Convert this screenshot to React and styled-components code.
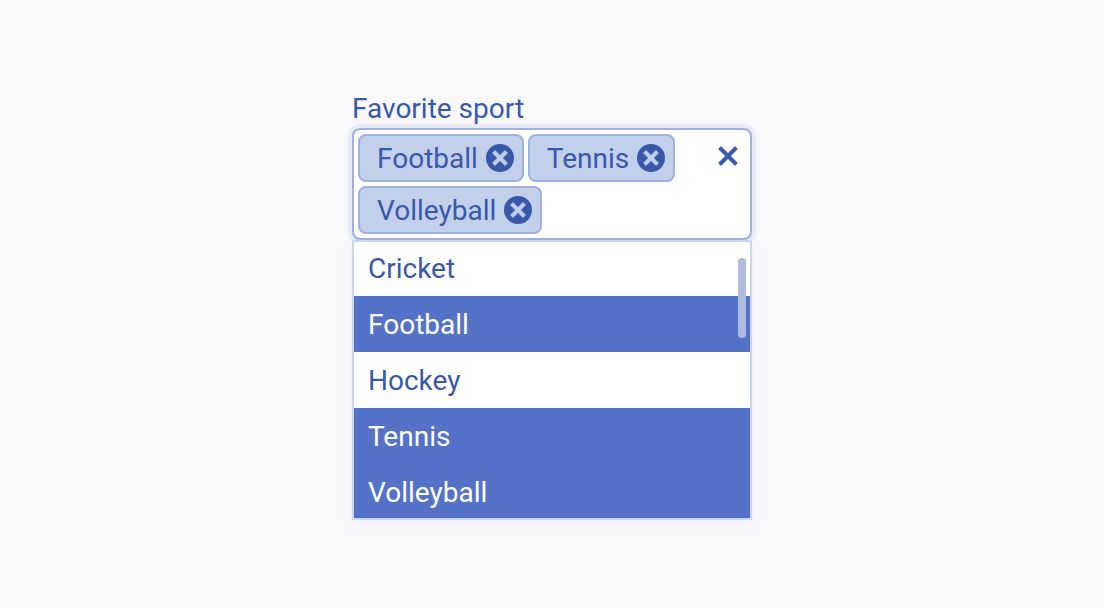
import { useState } from 'react'
import styled, { createGlobalStyle } from 'styled-components'

const sports = ['Cricket', 'Football', 'Hockey', 'Tennis', 'Volleyball']

const RemoveIcon = () => (
  <svg width='28' height='28' viewBox='-14 -14 28 28' aria-hidden='true'>
    <circle r='14' fill='#3858ac' />
    <path
      d='M0 -2.4L5 -7.4L7.4 -5L2.4 0L7.4 5L5 7.4L0 2.4L-5 7.4L-7.4 5L-2.4 0L-7.4 -5L-5 -7.4Z'
      fill='#c2d0eb'
      stroke='#c2d0eb'
      strokeLinejoin='round'
    />
  </svg>
)

const ClearIcon = () => (
  <svg width='28' height='28' viewBox='-14 -14 28 28' aria-hidden='true'>
    <path
      d='M0 -2.4L7 -9.4L9.4 -7L2.4 0L9.4 7L7 9.4L0 2.4L-7 9.4L-9.4 7L-2.4 0L-9.4 -7L-7 -9.4Z'
      fill='#3858ac'
      stroke='#3858ac'
      strokeLinejoin='round'
    />
  </svg>
)

const App = () => {
  const [selected, setSelected] = useState(['Football', 'Tennis', 'Volleyball'])

  const toggle = (sport) => {
    setSelected(
      selected.includes(sport)
        ? selected.filter((s) => s !== sport)
        : [...selected, sport]
    )
  }

  return (
    <Page>
      <GlobalStyle />
      <Field role='group' aria-labelledby='sport-label'>
        <Label id='sport-label'>Favorite sport</Label>
        <Control>
          <Chips>
            {selected.map((sport) => (
              <Chip key={sport}>
                {sport}
                <IconButton
                  type='button'
                  aria-label={`Remove ${sport}`}
                  onClick={() => toggle(sport)}
                >
                  <RemoveIcon />
                </IconButton>
              </Chip>
            ))}
          </Chips>
          <Clear>
            <IconButton
              type='button'
              aria-label='Clear all'
              onClick={() => setSelected([])}
            >
              <ClearIcon />
            </IconButton>
          </Clear>
        </Control>
        <Panel>
          <Options>
            {sports.map((sport) => (
              <li key={sport}>
                <Option $selected={selected.includes(sport)}>
                  <Check
                    type='checkbox'
                    checked={selected.includes(sport)}
                    onChange={() => toggle(sport)}
                  />
                  {sport}
                </Option>
              </li>
            ))}
          </Options>
          <Thumb />
        </Panel>
      </Field>
    </Page>
  )
}

const GlobalStyle = createGlobalStyle`
  * {
    box-sizing: border-box;
  }
  body {
    margin: 0;
    background-color: #f9f9fc;
    color: #3858ac;
    font-family: Roboto, sans-serif;
    font-size: 28px;
  }
`

const Page = styled.main`
  display: flex;
  justify-content: center;
  align-items: center;
  min-height: 100vh;
`

const Field = styled.div`
  width: 100%;
  max-width: 400px;
`

const Label = styled.div`
  padding-top: 2px;
  line-height: 38px;
`

const Control = styled.div`
  display: flex;
  align-items: flex-start;
  padding: 4px;
  background-color: #fff;
  border: 2px solid #9fb1dc;
  border-radius: 8px;
  box-shadow: 0 0 0 4px #e9ecf7;
`

const Chips = styled.ul`
  display: flex;
  flex: 1;
  flex-wrap: wrap;
  gap: 4px;
  min-height: 48px;
  margin: 0;
  padding: 0;
  list-style: none;
`

const Chip = styled.li`
  display: flex;
  align-items: center;
  gap: 8px;
  height: 48px;
  padding: 0 8px 0 17px;
  background-color: #c2d0eb;
  border: 2px solid #9fb1dc;
  border-radius: 8px;
`

const IconButton = styled.button`
  display: flex;
  padding: 0;
  background: none;
  border: 0;
  cursor: pointer;
`

const Clear = styled.div`
  padding: 8px 4px;
`

const Panel = styled.div`
  position: relative;
  overflow: hidden;
  background-color: #fff;
  border: 2px solid #cdd7ec;
  box-shadow: 0 4px 12px rgba(84, 104, 210, 0.08);
`

/* first and last rows run under the panel border */
const Options = styled.ul`
  margin: -2px 0;
  padding: 0;
  list-style: none;
`

const Option = styled.label`
  display: block;
  padding: 2px 14px 0;
  line-height: 54px;
  cursor: pointer;
  color: ${({ $selected }) => ($selected ? '#fff' : '#3858ac')};
  background-color: ${({ $selected }) => ($selected ? '#5472c8' : '#fff')};
`

const Check = styled.input`
  position: absolute;
  margin: 0;
  opacity: 0;
`

const Thumb = styled.div`
  position: absolute;
  top: 16px;
  right: 4px;
  width: 8px;
  height: 80px;
  background-color: #aebbde;
  border-radius: 4px;
`

export default App
